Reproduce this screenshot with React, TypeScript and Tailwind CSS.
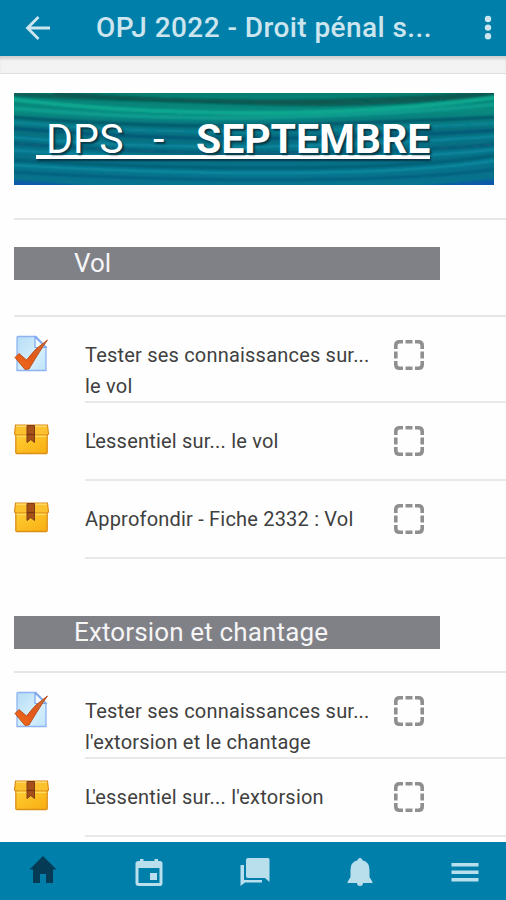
import React from 'react';

interface Activity {
  type: 'quiz' | 'package';
  lines: string[];
}

interface SectionProps {
  title: string;
  ruleClass: string;
  titleClass?: string;
  activities: Activity[];
}

const VOL: Activity[] = [
  { type: 'quiz', lines: ['Tester ses connaissances sur...', 'le vol'] },
  { type: 'package', lines: ["L'essentiel sur... le vol"] },
  { type: 'package', lines: ['Approfondir - Fiche 2332 : Vol'] },
];

const EXTORSION: Activity[] = [
  { type: 'quiz', lines: ['Tester ses connaissances sur...', "l'extorsion et le chantage"] },
  { type: 'package', lines: ["L'essentiel sur... l'extorsion"] },
];

const QuizIcon = () => (
  <svg width="36" height="38" viewBox="0 0 36 38" className="block">
    <defs>
      <linearGradient id="sheet" x1="0" y1="0" x2="1" y2="1">
        <stop offset="0" stopColor="#b5dcf5" />
        <stop offset="0.6" stopColor="#d6effc" />
        <stop offset="1" stopColor="#bde4fa" />
      </linearGradient>
      <linearGradient id="tick" x1="0" y1="1" x2="1" y2="0">
        <stop offset="0" stopColor="#f26a1b" />
        <stop offset="0.5" stopColor="#e2591a" />
        <stop offset="1" stopColor="#c9713f" />
      </linearGradient>
    </defs>
    <path d="M4 1.5H22L32 12V35.5H3V2.5Q3 1.5 4 1.5Z" fill="url(#sheet)" stroke="#8fb4f1" strokeWidth="1.3" />
    <path d="M21 2V12.5H32Z" fill="#f0f9ff" stroke="#7ba5ee" strokeWidth="1.2" />
    <path d="M1 22.5L5 18.5L12.5 25Q21 13 33.5 5Q27 14 15 34L11 34.5Z" fill="url(#tick)" stroke="#b64b17" strokeWidth="0.9" />
  </svg>
);

const PackageIcon = () => (
  <svg width="36" height="32" viewBox="0 0 36 32" className="block">
    <defs>
      <linearGradient id="box" x1="0" y1="0" x2="1" y2="1">
        <stop offset="0" stopColor="#ffce36" />
        <stop offset="1" stopColor="#f8ae10" />
      </linearGradient>
    </defs>
    <rect x="1.8" y="10" width="31.4" height="19.5" rx="1" fill="url(#box)" stroke="#dc8f16" strokeWidth="1.3" />
    <path d="M1.5 1H33.5L34.5 10L33.5 11H1.5L0.5 10Z" fill="#fbc12f" stroke="#d98716" strokeWidth="1.1" />
    <path d="M2 2.2H33" stroke="#ffdf75" strokeWidth="1.2" />
    <path d="M2.5 12.3H32.5" stroke="#ffe06a" strokeWidth="1.2" />
    <path d="M13 1.5H20.5V18.5L16.8 15.5L13 18.5Z" fill="#a65119" stroke="#7c3c16" strokeWidth="1" />
    <path d="M13 10.5H20.5" stroke="#77350f" strokeWidth="1.2" />
  </svg>
);

const CompletionBox = () => (
  <svg width="30" height="30" viewBox="0 0 30 30" className="block" fill="none" stroke="#8f8f8f" strokeWidth="3.6">
    <path d="M1.8 9V5.5Q1.8 1.8 5.5 1.8H9M21 1.8H24.5Q28.2 1.8 28.2 5.5V9M28.2 21V24.5Q28.2 28.2 24.5 28.2H21M9 28.2H5.5Q1.8 28.2 1.8 24.5V21" />
    <path d="M11.5 1.8H18.5M11.5 28.2H18.5M1.8 11.5V18.5M28.2 11.5V18.5" />
  </svg>
);

// Tucks the apostrophe under the arm of the L
const ActivityLine: React.FC<{ text: string }> = ({ text }) =>
  text.startsWith("L'") ? (
    <div>
      <span className="tracking-[-3.6px]">L</span>
      {text.slice(1)}
    </div>
  ) : (
    <div>{text}</div>
  );

const ActivityRow: React.FC<{ activity: Activity }> = ({ activity }) => {
  const isQuiz = activity.type === 'quiz';

  return (
    <div className={`flex pl-3.5 ${isQuiz ? 'h-[86px]' : 'h-[78px]'}`}>
      <div className={`w-[71px] shrink-0 ${isQuiz ? 'pt-[18px]' : 'pt-[21px]'}`}>
        {isQuiz ? <QuizIcon /> : <PackageIcon />}
      </div>
      <div className="flex flex-1 border-b-2 border-[#e9e9e9]">
        <div className="w-[309px] shrink-0 pt-[23px] text-[20px] leading-[31px] tracking-[0.2px] whitespace-nowrap text-[#404040]">
          {activity.lines.map((line) => (
            <ActivityLine key={line} text={line} />
          ))}
        </div>
        <div className="pt-[23px]">
          <CompletionBox />
        </div>
      </div>
    </div>
  );
};

const Section: React.FC<SectionProps> = ({ title, ruleClass, titleClass, activities }) => (
  <section>
    <h2 className={`ml-3.5 h-[33px] w-[426px] bg-[#808187] pl-[60px] text-[26px] leading-[33px] font-normal text-[#f5f5f6] ${titleClass ?? ''}`}>
      {title}
    </h2>
    <div className={`ml-3.5 h-0.5 bg-[#e6e6e6] ${ruleClass}`} />
    {activities.map((activity) => (
      <ActivityRow key={activity.lines.join(' ')} activity={activity} />
    ))}
  </section>
);

const Banner = () => (
  <div className="relative mt-[19px] ml-3.5 h-[92px] w-[480px] overflow-hidden">
    <svg width="480" height="92" viewBox="0 0 480 92" preserveAspectRatio="none" className="absolute inset-0">
      <defs>
        <linearGradient id="sea" x1="0" y1="0" x2="0" y2="1">
          <stop offset="0" stopColor="#087d70" />
          <stop offset="0.2" stopColor="#09897e" />
          <stop offset="0.4" stopColor="#087080" />
          <stop offset="0.7" stopColor="#077086" />
          <stop offset="1" stopColor="#08738f" />
        </linearGradient>
        <filter id="soft" x="-5%" y="-20%" width="110%" height="140%">
          <feGaussianBlur stdDeviation="1.4 1.2" />
        </filter>
      </defs>
      <rect width="480" height="92" fill="url(#sea)" />
      <g fill="none" filter="url(#soft)">
        <path d="M-5 1Q100 6 240 10T485 0" stroke="#075b55" strokeWidth="4" />
        <path d="M-5 6Q110 20 240 20T485 4" stroke="#0ca990" strokeWidth="4" />
        <path d="M40 0Q260 17 485 -1" stroke="#07564f" strokeWidth="3" />
        <path d="M-5 15Q140 28 270 24T485 11" stroke="#0c9d8f" strokeWidth="4" />
        <path d="M-5 24Q150 36 280 32T485 24" stroke="#06596a" strokeWidth="3" />
        <path d="M-5 29Q150 42 280 38T485 30" stroke="#088598" strokeWidth="2.5" />
        <path d="M-5 35Q150 48 280 45T485 37" stroke="#055776" strokeWidth="3" />
        <path d="M-5 44Q150 57 280 53T485 43" stroke="#07859d" strokeWidth="3" />
        <path d="M-5 50Q150 62 280 60T485 51" stroke="#075878" strokeWidth="2.5" />
        <path d="M-5 57Q150 67 280 66T485 56" stroke="#08869f" strokeWidth="3" />
        <path d="M-5 67Q150 76 280 75T485 62" stroke="#065f75" strokeWidth="3" />
        <path d="M-5 72Q150 81 280 80T485 67" stroke="#07889f" strokeWidth="3" />
        <path d="M-5 79Q150 88 280 87T485 76" stroke="#065e7d" strokeWidth="2.5" />
        <path d="M-5 87L90 94H-5ZM395 94L485 86V94Z" fill="#0759a8" />
      </g>
    </svg>
    <div className="relative ml-[22px] w-[394px] pt-[22px] text-white">
      <div className="flex h-10 text-[41px] leading-[49px] whitespace-pre [text-shadow:2px_2px_2px_#063646]">
        <span className="ml-[10px] w-[107px] shrink-0 tracking-[0.2px]">DPS</span>
        <span className="w-[43px] shrink-0">-</span>
        <span className="font-bold tracking-[-0.05px]">SEPTEMBRE</span>
      </div>
      <div className="h-1 bg-white shadow-[1px_2px_2px_#063646]" />
    </div>
  </div>
);

const Header = () => (
  <header className="flex h-14 shrink-0 items-center bg-[#007faa] text-[#cce5ee]">
    <svg width="26" height="26" viewBox="0 0 26 26" className="ml-[25px] block shrink-0" fill="none" stroke="currentColor" strokeWidth="2.8">
      <path d="M25 13H3M13.5 2L2.5 13L13.5 24" />
    </svg>
    <h1 className="ml-[45px] w-[385px] shrink-0 text-[28px] leading-[56px] font-medium tracking-[0.42px] whitespace-nowrap">OPJ 2022 - Droit pénal s...</h1>
    <svg width="8" height="26" viewBox="0 0 8 26" className="ml-[3px] block shrink-0 fill-current">
      <circle cx="4" cy="4" r="3.2" />
      <circle cx="4" cy="12.6" r="3.2" />
      <circle cx="4" cy="21.2" r="3.2" />
    </svg>
  </header>
);

const TabBar = () => (
  <nav className="flex h-[58px] shrink-0 bg-[#007faa] text-[#b9dfed]">
    <div className="flex w-[86px] justify-center pt-[14px] text-[#063b55]">
      <svg width="28" height="28" viewBox="0 0 28 28" fill="currentColor">
        <path d="M14 0L27.5 13.5H24V27H17V18H11V27H4V13.5H0.5Z" />
      </svg>
    </div>
    <div className="flex w-[126px] justify-center pt-4">
      <svg width="28" height="28" viewBox="0 0 28 28" fill="currentColor">
        <path fillRule="evenodd" d="M5 1H8.5V3H19.5V1H23V3H25Q27.5 3 27.5 5.5V25Q27.5 28 25 28H3.5Q.5 28 .5 25V5.5Q.5 3 3.5 3H5ZM3.5 10V25H24.5V10Z" />
        <rect x="15" y="15" width="7" height="7" />
      </svg>
    </div>
    <div className="flex w-[85px] justify-center pt-4">
      <svg width="30" height="28" viewBox="0 0 30 28" fill="currentColor">
        <path d="M8 0H28Q29.5 0 29.5 1.5V24L25 20H8Q6 20 6 18V2Q6 0 8 0Z" />
        <path d="M1 7H4V22H22V24.5H5L0.5 28V7.5Z" />
      </svg>
    </div>
    <div className="flex w-[126px] justify-center pt-4">
      <svg width="26" height="28" viewBox="0 0 26 28" fill="currentColor">
        <path d="M13 0Q15 0 15.5 2.2Q22.5 4 22.5 12V19L25.5 24V25H16Q16 28 13 28T10 25H.5V24L3.5 19V12Q3.5 4 10.5 2.2Q11 0 13 0Z" />
      </svg>
    </div>
    <div className="flex flex-1 justify-center pt-[21px]">
      <svg width="28" height="20" viewBox="0 0 28 20" fill="currentColor">
        <path d="M.5 0H27.5V3.5H.5ZM.5 7.5H27.5V11H.5ZM.5 15H27.5V18.5H.5Z" />
      </svg>
    </div>
  </nav>
);

const App: React.FC = () => {
  return (
    <div className="flex h-[900px] w-[506px] flex-col overflow-hidden bg-[#fefefe] font-['Roboto',sans-serif]">
      <Header />
      <div className="h-[18px] shrink-0 border-b border-[#dedede] bg-[#f3f3f3] shadow-[inset_0_4px_3px_-1px_#cfcfcf]" />
      <main className="min-h-0 flex-1 overflow-hidden">
        <Banner />
        <div className="mt-[33px] ml-3.5 h-0.5 bg-[#e6e6e6]" />
        <div className="mt-[27px]">
          <Section title="Vol" ruleClass="mt-[35px]" activities={VOL} />
        </div>
        <div className="mt-[57px]">
          <Section title="Extorsion et chantage" titleClass="tracking-[0.14px]" ruleClass="mt-[22px]" activities={EXTORSION} />
        </div>
      </main>
      <TabBar />
    </div>
  );
};

export default App;
